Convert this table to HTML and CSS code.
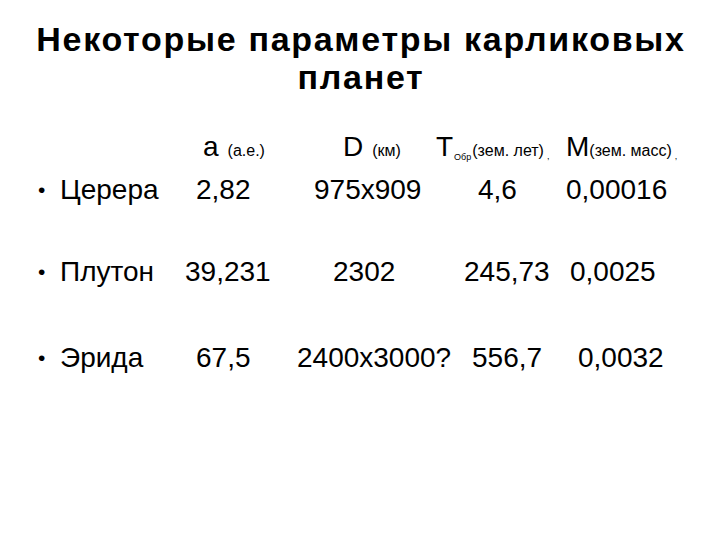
FILE: index.html
```html
<!DOCTYPE html>
<html lang="ru">
<head>
<meta charset="utf-8">
<title>Некоторые параметры карликовых планет</title>
<link rel="stylesheet" href="styles.css">
</head>
<body>
<div class="slide">
  <h1 class="title">Некоторые параметры карликовых<br>планет</h1>
  <div class="row head">
    <span class="cell"><span class="big">a</span><span class="unit u-a">(а.е.)</span></span>
    <span class="cell"><span class="big">D</span><span class="unit u-d">(км)</span></span>
    <span class="cell"><span class="big">T</span><span class="sub">Обр</span><span class="unit">(зем. лет)</span><span class="tiny">,</span></span>
    <span class="cell"><span class="big">M</span><span class="unit">(зем. масс)</span><span class="tiny">,</span></span>
  </div>
  <div class="row r1">
    <span class="bullet">•</span><span>Церера</span><span>2,82</span><span>975x909</span><span>4,6</span><span>0,00016</span>
  </div>
  <div class="row r2">
    <span class="bullet">•</span><span>Плутон</span><span>39,231</span><span>2302</span><span>245,73</span><span>0,0025</span>
  </div>
  <div class="row r3">
    <span class="bullet">•</span><span>Эрида</span><span>67,5</span><span>2400x3000?</span><span>556,7</span><span>0,0032</span>
  </div>
</div>
</body>
</html>
```
FILE: styles.css
```css
html, body {
  margin: 0;
  padding: 0;
  background: #ffffff;
}
.slide {
  width: 720px;
  height: 540px;
  font-family: "Liberation Sans", Arial, sans-serif;
  color: #000000;
  overflow: hidden;
}
.title {
  margin: 0;
  padding-top: 20px;
  padding-left: 2px;
  font-size: 34px;
  font-weight: bold;
  letter-spacing: 1.7px;
  line-height: 38px;
  text-align: center;
}
.row {
  display: grid;
  font-size: 28px;
  line-height: 32px;
  white-space: nowrap;
}
.head {
  margin-top: 35px;
  grid-template-columns: 203px 140px 93px 130px 1fr;
}
.head .cell:first-child { grid-column: 2; }
.big { font-size: 28px; }
.unit { font-size: 16px; }
.u-a, .u-d { margin-left: 9px; }
.sub { font-size: 9px; position: relative; top: 4px; margin-right: 1px; margin-left: 1px; }
.tiny { font-size: 9px; margin-left: 3px; position: relative; top: 3px; }
.r1 {
  margin-top: 5px;
  grid-template-columns: 38px 22px 136px 118px 164px 88px 1fr;
}
.r2 {
  margin-top: 50px;
  grid-template-columns: 38px 22px 125px 148px 131px 106px 1fr;
}
.r3 {
  margin-top: 54px;
  grid-template-columns: 38px 22px 136px 101px 175px 106px 1fr;
}
.bullet {
  font-size: 21px;
}
.row > span:first-child { grid-column: 2; }
```
